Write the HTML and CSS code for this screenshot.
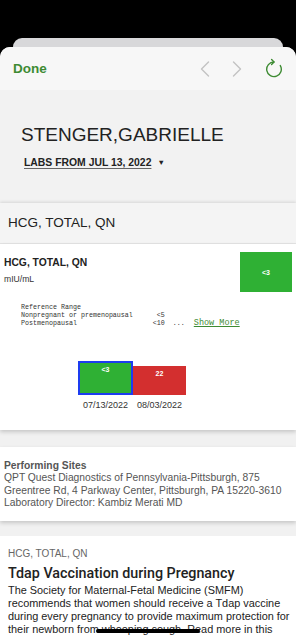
FILE: index.html
```html
<!DOCTYPE html>
<html>
<head>
<meta charset="utf-8">
<link rel="stylesheet" href="styles.css">
</head>
<body>
<div class="back-sheet"></div>
<div class="sheet">
  <div class="toolbar">
    <span class="done">Done</span>
    <div class="nav">
      <svg class="chev" width="10" height="16" viewBox="0 0 10 16"><polyline points="8.5,1 1.5,8 8.5,15" fill="none" stroke="#c3c3c3" stroke-width="1.4" stroke-linecap="round" stroke-linejoin="round"/></svg>
      <svg class="chev" width="10" height="16" viewBox="0 0 10 16"><polyline points="1.5,1 8.5,8 1.5,15" fill="none" stroke="#c3c3c3" stroke-width="1.4" stroke-linecap="round" stroke-linejoin="round"/></svg>
      <svg class="refresh" width="20" height="20" viewBox="0 0 20 20"><path d="M10 4 A7.3 7.3 0 1 0 16.3 7.6" fill="none" stroke="#3e8b33" stroke-width="1.4" stroke-linecap="round"/><polyline points="7.6,1.6 10,4 7.6,6.4" fill="none" stroke="#3e8b33" stroke-width="1.4" stroke-linecap="round" stroke-linejoin="round"/></svg>
    </div>
  </div>
  <div class="patient">
    <h1 class="name">STENGER,GABRIELLE</h1>
    <div class="labs"><span class="labs-link">LABS FROM JUL 13, 2022</span><span class="caret">&#9660;</span></div>
  </div>
  <div class="section-head">HCG, TOTAL, QN</div>
  <div class="card result">
    <div class="result-top">
      <div class="result-name">
        <div class="test-title">HCG, TOTAL, QN</div>
        <div class="unit">mIU/mL</div>
      </div>
      <div class="value-box">&lt;3</div>
    </div>
<pre class="ref">Reference Range
Nonpregnant or premenopausal      &lt;5
Postmenopausal                   &lt;10  ...<span class="more"><u>Show More</u></span></pre>
    <div class="chart">
      <div class="col">
        <div class="bar bar-green">&lt;3</div>
        <div class="date">07/13/2022</div>
      </div>
      <div class="col">
        <div class="bar bar-red">22</div>
        <div class="date">08/03/2022</div>
      </div>
    </div>
  </div>
  <div class="card sites">
    <div class="sites-title">Performing Sites</div>
    <div class="sites-text">QPT Quest Diagnostics of Pennsylvania-Pittsburgh, 875 Greentree Rd, 4 Parkway Center, Pittsburgh, PA 15220-3610 Laboratory Director: Kambiz Merati MD</div>
  </div>
  <div class="card article">
    <div class="article-tag">HCG, TOTAL, QN</div>
    <h2 class="article-title">Tdap Vaccination during Pregnancy</h2>
    <p class="article-text">The Society for Maternal-Fetal Medicine (SMFM) recommends that women should receive a Tdap vaccine during every pregnancy to provide maximum protection for their newborn from whooping cough. Read more in this</p>
  </div>
</div>
<div class="home-indicator"></div>
</body>
</html>
```

FILE: styles.css
```css
html, body {
  margin: 0;
  padding: 0;
  background: #000;
  height: 640px;
  overflow: hidden;
  font-family: "Liberation Sans", Arial, sans-serif;
}

.back-sheet {
  margin: 38px 13px 0;
  height: 9px;
  background: #d8d8da;
  border-radius: 9px 9px 0 0;
}

.sheet {
  background: #f1f1f1;
  border-radius: 10px 10px 0 0;
  overflow: hidden;
  height: 593px;
}

.toolbar {
  height: 43px;
  background: #f7f7f7;
  display: flex;
  align-items: center;
  padding: 0 12px 0 13px;
}

.done {
  color: #3e8b33;
  font-weight: bold;
  font-size: 13.5px;
  line-height: 43px;
}

.nav {
  margin-left: auto;
  display: flex;
  align-items: center;
  gap: 22px;
}

.chev {
  display: block;
}

.refresh {
  display: block;
  margin-top: -2px;
}

.patient {
  height: 113px;
  box-sizing: border-box;
  padding: 34px 0 0 21px;
  background: #f2f2f2;
}

.name {
  margin: 0;
  font-weight: normal;
  font-size: 19px;
  line-height: 22px;
  color: #222;
}

.labs {
  margin: 10px 0 0 3px;
  font-size: 10.4px;
  line-height: 13px;
  font-weight: bold;
  color: #222;
  display: flex;
  align-items: center;
}

.labs-link {
  text-decoration: underline;
  text-decoration-color: #666;
  text-underline-offset: 2px;
}

.caret {
  font-size: 7.5px;
  margin-left: 6px;
  color: #222;
}

.section-head {
  height: 40px;
  line-height: 40px;
  padding-left: 8px;
  background: #f4f4f4;
  font-size: 13.5px;
  color: #222;
  border-bottom: 1px solid #e4e4e4;
  box-shadow: 0 -1px 3px rgba(0, 0, 0, 0.12);
}

.card {
  background: #fff;
  box-shadow: 0 2px 4px rgba(0, 0, 0, 0.18);
}

.result {
  padding: 8px 4px 19.5px 4px;
}

.result-top {
  display: flex;
  align-items: flex-start;
}

.result-name {
  margin-top: 4px;
}

.test-title {
  font-weight: bold;
  font-size: 10.3px;
  line-height: 13px;
  color: #222;
}

.unit {
  margin-top: 5px;
  font-size: 8.6px;
  line-height: 11px;
  color: #333;
}

.value-box {
  margin-left: auto;
  width: 52px;
  height: 40px;
  background: #2fb034;
  color: #fff;
  font-size: 7px;
  font-weight: bold;
  display: flex;
  align-items: center;
  justify-content: center;
}

.ref {
  margin: 11px 0 0 17px;
  font-family: "Liberation Mono", "Courier New", monospace;
  font-size: 6.67px;
  line-height: 8px;
  color: #333;
}

.more {
  font-size: 8.5px;
  color: #3e8b33;
  margin-left: 9px;
}

.more u {
  text-underline-offset: 1px;
}

.chart {
  margin-top: 34px;
  padding-left: 74px;
  display: flex;
  align-items: flex-end;
}

.col {
  display: flex;
  flex-direction: column;
  align-items: center;
}

.bar {
  box-sizing: border-box;
  color: #fff;
  font-size: 7px;
  font-weight: bold;
  text-align: center;
}

.bar-green {
  width: 55px;
  height: 34px;
  background: #2fb034;
  border: 2px solid #1d3cf0;
  padding-top: 3px;
}

.bar-red {
  width: 53px;
  height: 29px;
  background: #d32f2f;
  padding-top: 4px;
}

.date {
  margin-top: 4.5px;
  font-size: 9px;
  line-height: 11px;
  color: #333;
}

.sites {
  margin-top: 17px;
  padding: 12px 4px 11px 4px;
  color: #555;
  font-size: 10.3px;
  line-height: 12.5px;
}

.sites-title {
  font-weight: bold;
  line-height: 13px;
}

.article {
  margin-top: 15px;
  padding: 11px 4px 0 8px;
  height: 200px;
  box-shadow: none;
}

.article-tag {
  font-size: 10px;
  line-height: 13px;
  color: #666;
}

.article-title {
  margin: 4px 0 0;
  font-family: Roboto, "Liberation Sans", sans-serif;
  font-weight: 500;
  font-size: 14.3px;
  line-height: 18px;
  color: #222;
}

.article-text {
  margin: 2px 0 0;
  font-size: 10.9px;
  line-height: 13.3px;
  color: #222;
}

.home-indicator {
  position: fixed;
  left: 96px;
  bottom: 7px;
  width: 104px;
  height: 4px;
  border-radius: 2px;
  background: #000;
}
```
